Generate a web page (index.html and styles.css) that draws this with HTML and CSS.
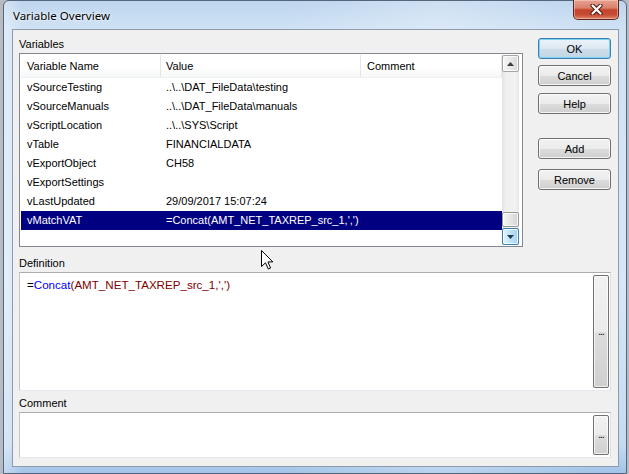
FILE: index.html
```html
<!DOCTYPE html>
<html>
<head>
<meta charset="utf-8">
<title>Variable Overview</title>
<link rel="stylesheet" href="styles.css">
</head>
<body>
<div class="window">
  <div class="titlebar">
    <span class="title">Variable Overview</span>
    <div class="close">
      <svg width="13" height="11" viewBox="0 0 13 11"><path d="M2.5 1.5 L10.5 9.5 M10.5 1.5 L2.5 9.5" stroke="#4a1c12" stroke-width="4.2" stroke-linecap="round"/><path d="M2.5 1.5 L10.5 9.5 M10.5 1.5 L2.5 9.5" stroke="#ffffff" stroke-width="2.2" stroke-linecap="round"/></svg>
    </div>
  </div>
  <div class="client">
    <div class="top">
      <div class="vars">
        <div class="label vars-label">Variables</div>
        <div class="listbox">
          <div class="list">
            <div class="lv-header">
              <div class="cell c1 hcell">Variable Name</div>
              <div class="cell c2 hcell">Value</div>
              <div class="cell c3 hcell">Comment</div>
            </div>
            <div class="row"><div class="cell c1">vSourceTesting</div><div class="cell c2">..\..\DAT_FileData\testing</div><div class="cell c3"></div></div>
            <div class="row"><div class="cell c1">vSourceManuals</div><div class="cell c2">..\..\DAT_FileData\manuals</div><div class="cell c3"></div></div>
            <div class="row"><div class="cell c1">vScriptLocation</div><div class="cell c2">..\..\SYS\Script</div><div class="cell c3"></div></div>
            <div class="row"><div class="cell c1">vTable</div><div class="cell c2">FINANCIALDATA</div><div class="cell c3"></div></div>
            <div class="row"><div class="cell c1">vExportObject</div><div class="cell c2">CH58</div><div class="cell c3"></div></div>
            <div class="row"><div class="cell c1">vExportSettings</div><div class="cell c2"></div><div class="cell c3"></div></div>
            <div class="row"><div class="cell c1">vLastUpdated</div><div class="cell c2">29/09/2017 15:07:24</div><div class="cell c3"></div></div>
            <div class="row selected"><div class="cell c1">vMatchVAT</div><div class="cell c2">=Concat(AMT_NET_TAXREP_src_1,',')</div><div class="cell c3"></div></div>
          </div>
          <div class="vscroll">
            <div class="sb-btn">
              <svg width="7" height="4" viewBox="0 0 7 4"><path d="M0 4 L3.5 0 L7 4 Z" fill="#3c3c3c"/></svg>
            </div>
            <div class="sb-track"></div>
            <div class="sb-thumb"></div>
            <div class="sb-btn sb-hover">
              <svg width="7" height="4" viewBox="0 0 7 4"><path d="M0 0 L7 0 L3.5 4 Z" fill="#1d3a5c"/></svg>
            </div>
          </div>
        </div>
      </div>
      <div class="buttons">
        <div class="btn btn-default">OK</div>
        <div class="btn btn-cancel">Cancel</div>
        <div class="btn btn-help">Help</div>
        <div class="btn btn-add">Add</div>
        <div class="btn btn-remove">Remove</div>
      </div>
    </div>
    <div class="label def-label">Definition</div>
    <div class="edit def-edit">
      <div class="edit-text"><span class="op">=</span><span class="fn">Concat</span><span class="arg">(AMT_NET_TAXREP_src_1,',')</span></div>
      <div class="ellipsis">...</div>
    </div>
    <div class="label com-label">Comment</div>
    <div class="edit com-edit">
      <div class="edit-text"></div>
      <div class="ellipsis">...</div>
    </div>
  </div>
</div>
<svg class="cursor" width="13" height="20" viewBox="0 0 13 20"><path d="M0.5 0.5 L0.5 16.5 L4.5 12.8 L7.3 19 L9.6 18 L6.9 11.9 L11.8 11.9 Z" fill="#ffffff" stroke="#000000" stroke-width="1" stroke-linejoin="miter"/></svg>
</body>
</html>
```
FILE: styles.css
```css
* { box-sizing: border-box; }

body {
  margin: 0;
  width: 629px;
  height: 474px;
  overflow: hidden;
  background: #b7bcc3;
  font-family: "Liberation Sans", Arial, sans-serif;
  font-size: 11px;
  color: #000;
}

.window {
  margin-left: 3px;
  width: 624px;
  height: 474px;
  border: 1px solid #55657a;
  border-radius: 6px 6px 0 0;
  background:
    linear-gradient(to right, rgba(255,255,255,0.35), rgba(255,255,255,0) 3%, rgba(255,255,255,0) 45%, rgba(255,255,255,0.25) 70%, rgba(255,255,255,0) 95%),
    linear-gradient(to bottom, #bdd5ee 0, #cfe2f5 28px, #d6e7f7 60%, #c4dbf2 94%, #a3c4e8 100%);
  display: flex;
  flex-direction: column;
}

.titlebar {
  height: 28px;
  display: flex;
  padding-left: 9px;
}

.title {
  align-self: center;
  font-family: "Noto Sans", "Open Sans", sans-serif;
  font-size: 11.5px;
  color: #000;
  text-shadow: 0 0 5px rgba(255,255,255,0.9), 0 0 2px rgba(255,255,255,0.9);
}

.close {
  margin-left: auto;
  margin-right: 7px;
  margin-top: -1px;
  width: 46px;
  height: 20px;
  border: 1px solid #5e2418;
  border-top: none;
  border-radius: 0 0 5px 5px;
  background: linear-gradient(#e7a492 0%, #d9806b 42%, #c4432b 52%, #c74b33 78%, #de8a6e 100%);
  box-shadow: inset 0 0 0 1px rgba(255,220,210,0.45);
  display: flex;
  align-items: center;
  justify-content: center;
}

.client {
  margin: 0 7px 0 8px;
  height: 438px;
  border: 1px solid #8e9bab;
  background: #f0f0f0;
  padding: 8px 7px 8px 6px;
  display: flex;
  flex-direction: column;
}

.top {
  height: 209px;
  display: flex;
}

.vars {
  width: 504px;
  display: flex;
  flex-direction: column;
}

.label {
  font-size: 11px;
  line-height: 13px;
}

.vars-label {
  height: 15px;
}

.listbox {
  height: 194px;
  border: 1px solid #828790;
  background: #fff;
  padding: 1px 3px 1px 1px;
  display: flex;
}

.list {
  flex: 1;
  display: flex;
  flex-direction: column;
}

.lv-header {
  height: 23px;
  display: flex;
  background: linear-gradient(#ffffff 0%, #ffffff 55%, #f6f7f8 100%);
  border-bottom: 1px solid #eef0f2;
}

.row {
  height: 19px;
  display: flex;
}

.cell {
  line-height: 18px;
  white-space: nowrap;
  overflow: hidden;
}

.hcell {
  line-height: 22px;
}

.c1 { width: 139px; padding-left: 6px; }
.c2 { width: 200px; padding-left: 6px; }
.c3 { width: 142px; padding-left: 7px; }

.lv-header .c2,
.lv-header .c3 {
  border-left: 1px solid #e5e5e5;
  padding-left: 5px;
}
.lv-header .c3 { padding-left: 6px; border-right: 1px solid #e5e5e5; }

.row.selected {
  background: #000080;
  color: #fff;
}
.row.selected .cell { line-height: 19px; }

.vscroll {
  width: 17px;
  display: flex;
  flex-direction: column;
  background: linear-gradient(to right, #e2e2e2, #efefef 20%, #f2f2f2 80%, #e6e6e6);
}

.sb-btn {
  height: 17px;
  border: 1px solid #a4a4a4;
  border-radius: 2px;
  background: linear-gradient(to right, #f6f6f6, #e9e9e9 50%, #dadada);
  box-shadow: inset 0 0 0 1px rgba(255,255,255,0.8);
  display: flex;
  align-items: center;
  justify-content: center;
}

.sb-track {
  flex: 1;
}

.sb-thumb {
  height: 15px;
  margin-bottom: 1px;
  border: 1px solid #979797;
  border-radius: 2px;
  background: linear-gradient(to right, #f6f6f6, #e6e6e6 50%, #d3d3d3);
  box-shadow: inset 0 0 0 1px rgba(255,255,255,0.8);
}

.sb-hover {
  border-color: #3c7fb1;
  background: linear-gradient(to right, #e6f4fc, #bfe3f8 50%, #a2d3f0);
}

.buttons {
  margin-left: auto;
  width: 73px;
  display: flex;
  flex-direction: column;
}

.btn {
  height: 21px;
  border: 1px solid #707070;
  border-radius: 3px;
  background: linear-gradient(#f2f2f2 0%, #ebebeb 50%, #dddddd 51%, #cfcfcf 100%);
  box-shadow: inset 0 0 0 1px rgba(255,255,255,0.75);
  display: flex;
  align-items: center;
  justify-content: center;
  font-size: 11px;
}

.btn-default {
  border-color: #3c7fb1;
  background: linear-gradient(#eaf3f9 0%, #dde9f2 50%, #cddde9 51%, #c2d6e4 100%);
  box-shadow: inset 0 0 0 1px #7dd1f3;
}

.btn-cancel { margin-top: 6px; }
.btn-help { margin-top: 7px; }
.btn-add { margin-top: 24px; }
.btn-remove { margin-top: 10px; }

.def-label {
  height: 25px;
  display: flex;
  align-items: flex-end;
  padding-bottom: 2px;
  line-height: 14px;
}

.com-label {
  height: 21px;
  display: flex;
  align-items: flex-end;
  padding-bottom: 2px;
  line-height: 14px;
}

.edit {
  background: #fff;
  border: 1px solid #e3e9ef;
  border-top-color: #abadb3;
  border-left-color: #c4c6cc;
  border-right-color: #dbdfe6;
  display: flex;
}

.def-edit { height: 119px; }
.com-edit { height: 46px; }

.edit-text {
  flex: 1;
  padding: 4px 0 0 7px;
  line-height: 16px;
  font-size: 11.6px;
  white-space: nowrap;
}

.op { color: #000; }
.fn { color: #0000ff; }
.arg { color: #800000; }

.ellipsis {
  width: 16px;
  margin: 2px 1px 2px 0;
  border: 1px solid #707070;
  border-radius: 2px;
  background: linear-gradient(#f2f2f2 0%, #ebebeb 50%, #dddddd 51%, #cfcfcf 100%);
  box-shadow: inset 0 0 0 1px rgba(255,255,255,0.7);
  display: flex;
  align-items: center;
  justify-content: center;
  font-size: 10px;
  line-height: 10px;
  letter-spacing: -1px;
}

.cursor {
  position: absolute;
  left: 261px;
  top: 250px;
}
```
